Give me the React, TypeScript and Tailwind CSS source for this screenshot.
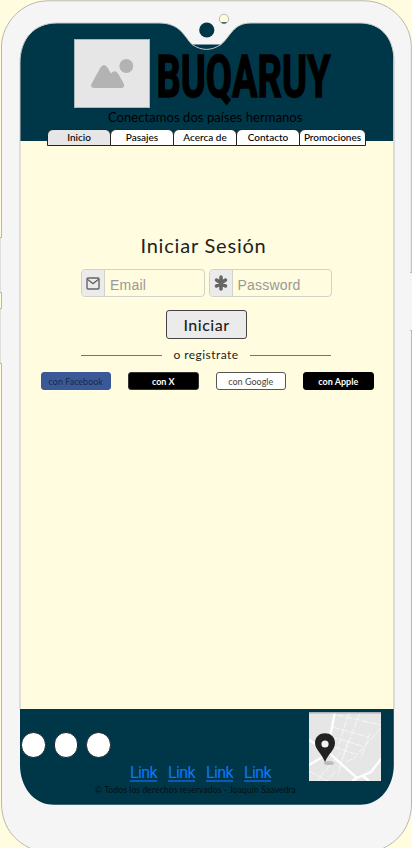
import React from 'react';
import { clsx } from 'clsx';

const tabs = ['Inicio', 'Pasajes', 'Acerca de', 'Contacto', 'Promociones'];

function PictureIcon() {
  return (
    <svg className="h-[69px] w-[76px] shrink-0" viewBox="0 0 76 69">
      <rect x=".5" y=".5" width="75" height="68" fill="#e6e6e6" stroke="#a9b8bc" />
      <circle cx="52.3" cy="27" r="6.9" fill="#b3b3b3" />
      <path d="M18 44 L26.5 28.5 Q30 23.5 33.5 28.5 L37 34.5 Q40.5 30 44 34.5 L49 43 Q52 49 47 49 L21 49 Q15 49 18 44Z" fill="#b3b3b3" />
    </svg>
  );
}

function MapIcon() {
  return (
    <svg className="h-[69px] w-[72px]" viewBox="0 0 72 69">
      <rect width="72" height="69" fill="#e6e6e6" />
      <g stroke="#f7f7f7" fill="none" strokeWidth="1">
        <path d="M40 1 L29 35 M51 1 L33 48 M28 3 L72 13 M24 15 L59 25 M22 25 L53 34 M39 28 L29 62 M32 40 L8 69 M72 16 L44 47 L35 50 M61 21 L52 46 M25 35 L46 42 M0 59 L18 69 M26 60 L18 69" strokeDasharray="7 1.5" />
        <path d="M26 0 L20 30 L18 42 M0 53 L20 41 L48 66 L62 60 L72 47 M48 66 L43 69 M0 28 L8 33 M54 64 L60 69" stroke="#fff" strokeWidth="2.3" />
      </g>
      <ellipse cx="20" cy="51" rx="5" ry="2" fill="#aaa" opacity=".7" />
      <path d="M16 50 C13 42 6 37 6 31 C6 18 26 18 26 31 C26 38 19 42 16 50Z" fill="#222" />
      <circle cx="16" cy="32" r="3.6" fill="#f4f4f4" />
      <rect width="72" height="1.5" fill="#a8b1b3" />
    </svg>
  );
}

function PhoneFrame() {
  return (
    <svg className="pointer-events-none absolute inset-0 h-[848px] w-[412px]" viewBox="0 0 412 848">
      <path
        fillRule="evenodd"
        fill="#f5f5f5"
        d="M48 .8 H364 C392 1 411 24 411.3 46 V804 C411 829 396 845 374 852 H40 C17 845 2 829 1.5 804 V46 C2 24 21 1 48 .8Z M57 23 C34 23 20 39 20 63 V765 C20 786 33 804.8 54 804.8 H360 C381 804.8 393.8 786 393.8 765 V58 C393 37 380 23 360 23 H251 C233 23 231 36 221 44.5 H192 C184 36 180 23 159 23Z"
      />
      <path fill="none" stroke="#b8b8b0" d="M48 .8 H364 C392 1 411 24 411.3 46 V272 M411.5 330 V804 C411 829 396 845 374 852 M40 852 C17 845 2 829 1.5 804 V363 M1.5 308 V292 M1.5 238 V46 C2 24 21 1 48 .8" />
      <path d="M0 238 H3 V292 H0Z M0 308 H3 V363 H0Z M410 272 H412 V330 H410Z" fill="#f5f5f5" />
      <path d="M.5 238 V292 M.5 308 V363" stroke="#dededa" />
      <path d="M0 237.5 H2 M0 292.5 H2 M0 308.5 H2 M0 363.5 H2 M410 272.5 H412 M410 330.5 H412" stroke="#bbb" />
      <path fill="none" stroke="#c7c8c5" d="M20 709 V63 C20 39 34 23 57 23 H159 C180 23 184 36 192 44.5 C202 51 211 51 221 44.5 C231 36 233 23 251 23 H360 C380 23 393 37 393.8 58" />
      <path d="M394 58 V709" stroke="#d5d5d2" strokeWidth="1.7" />
      <circle cx="206.8" cy="30" r="7.6" fill="#003748" />
      <circle cx="224" cy="19" r="4.7" fill="#fffcdf" stroke="#aaa" strokeWidth=".8" />
      <path d="M220.8 22.2 H227.2 Q224 24.8 220.8 22.2Z" fill="#003748" />
    </svg>
  );
}

function Header() {
  return (
    <header className="h-[119px] bg-[#003748] pt-[17px]">
      <div className="ml-[54px] flex h-[69px] items-start">
        <PictureIcon />
        <svg className="ml-[7px] h-[66px] w-[180px] overflow-visible" viewBox="0 0 180 66">
          <text transform="translate(-.5 58) scale(1 1.34)" textLength="174" lengthAdjust="spacingAndGlyphs" fontSize="44" fontWeight="700" stroke="#000" strokeWidth="1.2" className="font-['Roboto',sans-serif]">BUQARUY</text>
        </svg>
      </div>
      <p className="h-[21px] pt-px pl-[88px] text-[13px] leading-[17px] tracking-[0.06px] whitespace-nowrap">Conectamos dos países hermanos</p>
      <nav className="ml-[27px] flex">
        {tabs.map((tab, i) => (
          <div
            key={tab}
            className={clsx(
              'flex h-[17px] items-center justify-center rounded-t-[6px] border border-[#222] text-[10px] font-medium whitespace-nowrap',
              i === 4 ? 'w-[67px]' : '-mr-px w-[64px]',
              i === 0 ? 'bg-[#e6e6e6]' : 'bg-white',
            )}
          >
            {tab}
          </div>
        ))}
      </nav>
    </header>
  );
}

function Field({ label, children }: { label: string; children: React.ReactNode }) {
  return (
    <div className="flex h-[28px] w-[123.5px] overflow-hidden rounded-[4px] border border-[#d1d2c8]">
      <div className="flex w-[23px] items-center justify-center border-r border-[#d1d2c8] bg-[#ebebeb]">{children}</div>
      <span className="pt-px pl-[5px] font-['Liberation_Sans',sans-serif] text-[14px] leading-[28px] tracking-[0.2px] text-[#999]">{label}</span>
    </div>
  );
}

function Login() {
  return (
    <main className="flex h-[568px] flex-col items-center pt-[91px] text-[#222]">
      <h1 className="mr-[7px] text-[20px] leading-[26px] tracking-[0.8px]">Iniciar Sesión</h1>
      <div className="mt-[11px] mr-[1px] flex gap-[4px]">
        <Field label="Email">
          <svg width="14" height="13" viewBox="0 0 14 13" fill="none" stroke="#666" strokeWidth="1.4">
            <rect x="1" y="1" width="12" height="11" rx="1" />
            <path d="M1 2 L7 6.5 L13 2" />
          </svg>
        </Field>
        <Field label="Password">
          <svg width="14" height="16" viewBox="0 0 14 16" stroke="#666" strokeWidth="3.5" strokeLinecap="round">
            <path d="M7 2 V14 M2.5 5 L11.5 11 M11.5 5 L2.5 11" />
          </svg>
        </Field>
      </div>
      <button className="mt-[13px] mr-[1px] h-[29px] w-[81px] rounded-[3px] border border-[#444] bg-[#ebebeb] text-[16px] leading-none font-medium tracking-[0.5px]">Iniciar</button>
      <div className="mt-[7px] mr-[2px] flex h-[18px] items-center">
        <div className="mt-px h-[1.5px] w-[81px] bg-[#77756b]" />
        <span className="w-[88px] text-center text-[12px] tracking-[0.45px]">o registrate</span>
        <div className="mt-px h-[1.5px] w-[81px] bg-[#77756b]" />
      </div>
      <div className="mt-[8px] flex gap-[17px] text-[9px] leading-none">
        <button className="h-[18px] w-[70.5px] rounded-[3px] border border-[#3b5998] bg-[#3b5998] text-[#172947]">con Facebook</button>
        <button className="h-[18px] w-[70.5px] rounded-[3px] border border-[#333] bg-black font-bold text-white">con X</button>
        <button className="h-[18px] w-[70.5px] rounded-[3px] border border-[#555] bg-white text-[#444]">con Google</button>
        <button className="h-[18px] w-[70.5px] rounded-[3px] border border-black bg-black font-bold text-white">con Apple</button>
      </div>
    </main>
  );
}

function Footer() {
  return (
    <footer className="flex h-[96px] bg-[#003748] pt-[3px]">
      <div className="w-[289px]">
        <div className="flex gap-[8px] pt-[20px] pl-px">
          {[0, 1, 2].map((n) => <div key={n} className="h-[26px] w-[24.5px] rounded-full border border-[#17252b] bg-white" />)}
        </div>
        <div className="mt-[5px] ml-[110px] flex gap-[11px] font-['Roboto',sans-serif] text-[16px] leading-[20px] tracking-[-0.6px] text-[#0878f8]">
          {[0, 1, 2, 3].map((n) => <a key={n} href="#" className="w-[27px] underline decoration-[#075bb8] decoration-2 underline-offset-2">Link</a>)}
        </div>
        <p className="ml-[75px] text-[8.5px] leading-[14px] tracking-[0.13px] whitespace-nowrap text-[#001016]">© Todos los derechos reservados - Joaquin Saavedra</p>
      </div>
      <MapIcon />
    </footer>
  );
}

export default function App() {
  return (
    <div className="relative h-[848px] w-[412px] overflow-hidden bg-[#fffcdf] pt-[22px] pl-5 font-['Lato',sans-serif] text-black">
      <div className="w-[374px]">
        <Header />
        <Login />
        <Footer />
      </div>
      <PhoneFrame />
    </div>
  );
}
